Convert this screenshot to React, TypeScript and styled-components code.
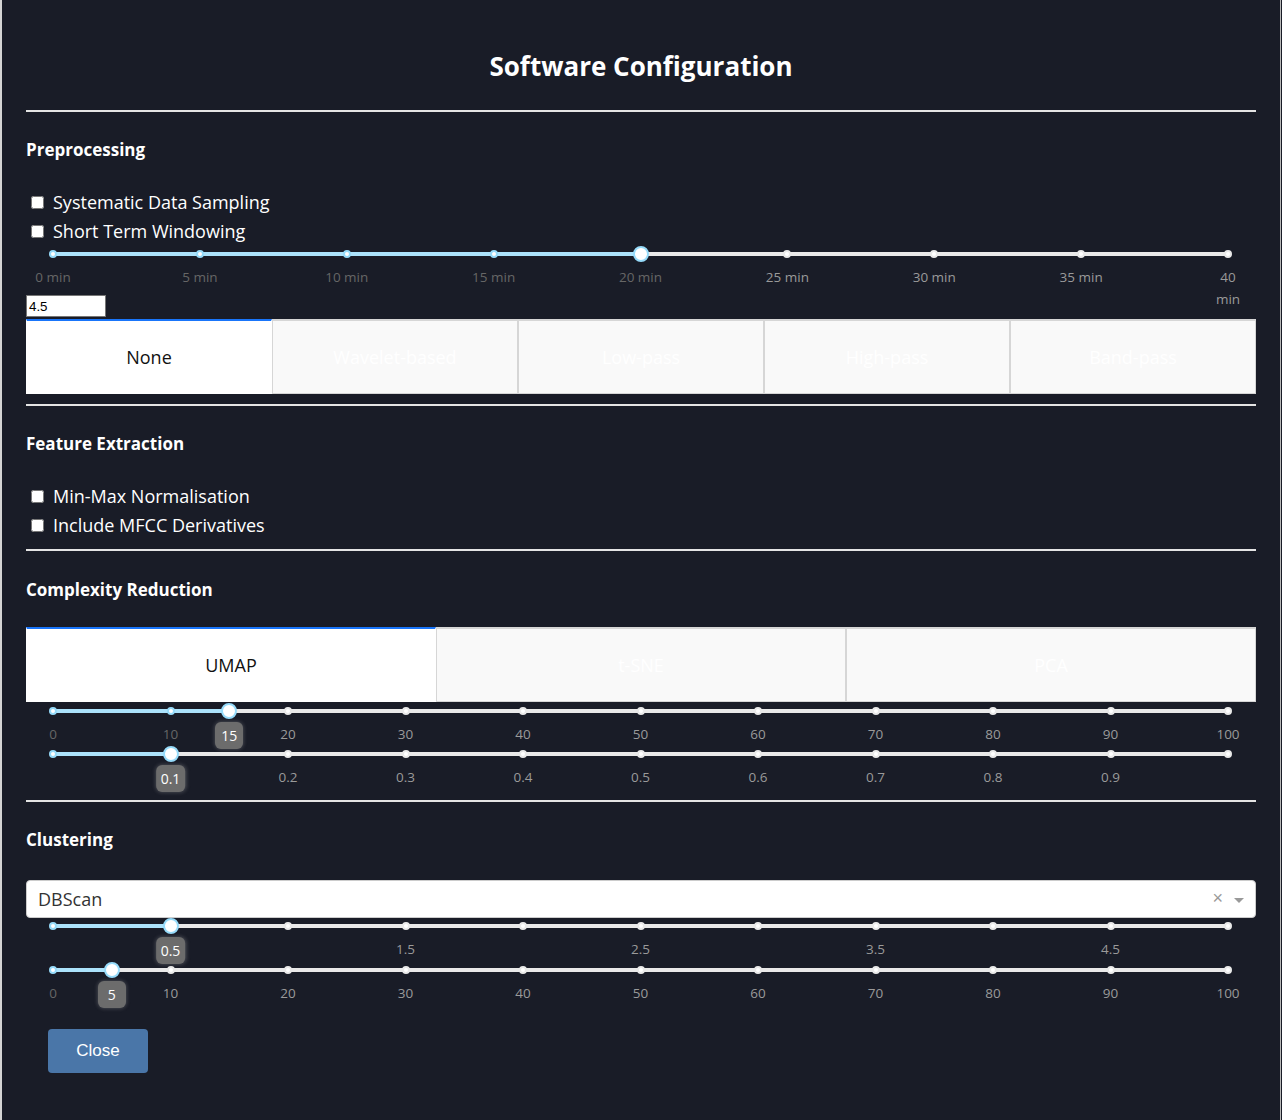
import React from "react";
import styled, { createGlobalStyle } from "styled-components";

const GlobalStyle = createGlobalStyle`
  html, body { margin: 0; padding: 0; background: #191c27; }
  body { font-family: "Open Sans", "Noto Sans", sans-serif; color: #fff; }
  * { box-sizing: border-box; }
`;

const Modal = styled.div`
  width: 1281px;
  min-height: 1120px;
  background: #191c27;
  border-left: 2px solid #d4d4d4;
  border-right: 1px solid #b8b8b8;
  padding: 0 24px 40px 24px;
`;

const Title = styled.h2`
  margin: 0 0 24px 0;
  padding-top: 46px;
  font: 700 26px/40px "Open Sans", sans-serif;
  text-align: center;
  color: #fff;
`;

const Divider = styled.hr<{ $top?: number }>`
  margin: ${(p) => p.$top ?? 0}px 0 0 0;
  border: 0;
  height: 2px;
  background: #e4e4e4;
`;

const SectionTitle = styled.h3<{ $top?: number; $bottom?: number }>`
  margin: ${(p) => p.$top ?? 26}px 0 ${(p) => p.$bottom ?? 26}px 0;
  font: 700 17px/24px "Open Sans", sans-serif;
  color: #fff;
`;

const CheckRow = styled.label`
  display: flex;
  align-items: center;
  height: 29px;
  font: 400 18px/29px "Open Sans", sans-serif;
  color: #fff;
`;

const CheckBox = styled.input`
  width: 13px;
  height: 13px;
  margin: 0 9px 0 5px;
`;

const NumberInput = styled.input`
  display: block;
  width: 80px;
  height: 22px;
  margin-top: 6px;
  padding: 1px 2px;
  border: 1px solid #767676;
  font: 400 13.33px "Liberation Sans", Arial, sans-serif;
  color: #000;
  background: #fff;
`;

const TabBar = styled.div<{ $top?: number }>`
  display: flex;
  margin-top: ${(p) => p.$top ?? 0}px;
  height: 75px;
`;

const Tab = styled.div<{ $selected?: boolean }>`
  flex: 1 1 0;
  display: flex;
  align-items: center;
  justify-content: center;
  font: 400 18px "Open Sans", sans-serif;
  background: ${(p) => (p.$selected ? "#fff" : "#f9f9f9")};
  color: ${(p) => (p.$selected ? "#111" : "#fff")};
  border: 1px solid ${(p) => (p.$selected ? "#fff" : "#d6d6d6")};
  border-top: 2px solid ${(p) => (p.$selected ? "#1975fa" : "#d6d6d6")};
`;

const SliderBox = styled.div<{ $top?: number }>`
  position: relative;
  height: 43px;
  margin: ${(p) => p.$top ?? 0}px 28px 0 27px;
`;

const Rail = styled.div`
  position: absolute;
  left: 0;
  right: 0;
  top: 6px;
  height: 4px;
  border-radius: 6px;
  background: #e9e9e9;
`;

const Track = styled.div`
  position: absolute;
  left: 0;
  top: 6px;
  height: 4px;
  border-radius: 6px;
  background: #abe2fb;
`;

const Dot = styled.span<{ $active?: boolean }>`
  position: absolute;
  top: 4px;
  width: 8px;
  height: 8px;
  margin-left: -4px;
  border-radius: 50%;
  background: #fff;
  border: 2px solid ${(p) => (p.$active ? "#96dbfa" : "#e9e9e9")};
`;

const Handle = styled.span`
  position: absolute;
  top: 0;
  width: 16px;
  height: 16px;
  margin-left: -8px;
  border-radius: 50%;
  background: #fff;
  border: 2px solid #96dbfa;
  z-index: 2;
`;

const MarkLabel = styled.span<{ $active?: boolean }>`
  position: absolute;
  top: 20px;
  transform: translateX(-50%);
  text-align: center;
  font: 400 13.5px/22px "Open Sans", sans-serif;
  color: ${(p) => (p.$active ? "#666" : "#9a9a9a")};
`;

const Tooltip = styled.span`
  position: absolute;
  top: 19px;
  transform: translateX(-50%);
  min-width: 28px;
  height: 27px;
  padding: 0 5px;
  border-radius: 6px;
  background: #6c6c6c;
  box-shadow: 0 0 4px rgba(200, 200, 200, 0.35);
  color: #fff;
  font: 400 14px/27px "Open Sans", sans-serif;
  text-align: center;
  z-index: 3;
`;

type Mark = { v: number; text: string };

type SliderProps = {
  min: number;
  max: number;
  value: number;
  dots: number[];
  marks: Mark[];
  tooltip?: string;
  top?: number;
};

const Slider = ({ min, max, value, dots, marks, tooltip, top }: SliderProps) => {
  const pct = (v: number) => ((v - min) / (max - min)) * 100;
  return (
    <SliderBox $top={top}>
      <Rail />
      <Track style={{ width: `${pct(value)}%` }} />
      {dots.map((d) => (
        <Dot key={`d${d}`} $active={d <= value} style={{ left: `${pct(d)}%` }} />
      ))}
      {marks.map((m) => (
        <MarkLabel key={`m${m.v}`} $active={m.v <= value} style={{ left: `${pct(m.v)}%` }}>
          {m.text}
        </MarkLabel>
      ))}
      <Handle style={{ left: `${pct(value)}%` }} />
      {tooltip && <Tooltip style={{ left: `${pct(value)}%` }}>{tooltip}</Tooltip>}
    </SliderBox>
  );
};

const Dropdown = styled.div`
  display: flex;
  align-items: center;
  height: 38px;
  margin-top: 28px;
  padding: 0 11px 0 11px;
  border: 1px solid #ccc;
  border-radius: 4px;
  background: #fff;
`;

const DropValue = styled.span`
  flex: 1;
  font: 400 18px "Open Sans", sans-serif;
  color: #333;
`;

const ClearX = styled.span`
  font: 400 18px/1 "Liberation Sans", Arial, sans-serif;
  color: #999;
  margin-right: 11px;
  margin-top: -3px;
`;

const Caret = styled.span`
  width: 0;
  height: 0;
  border-left: 5px solid transparent;
  border-right: 5px solid transparent;
  border-top: 5px solid #999;
  margin-top: 3px;
`;

const CloseButton = styled.button`
  display: block;
  width: 100px;
  height: 44px;
  margin: 24px 0 0 22px;
  border: 0;
  border-radius: 4px;
  background: #4a76a8;
  color: #fff;
  font: 400 17px "Liberation Sans", Arial, sans-serif;
`;

const range = (a: number, b: number, s: number) => {
  const out: number[] = [];
  for (let i = 0; a + i * s <= b + 1e-9; i++) out.push(Math.round((a + i * s) * 100) / 100);
  return out;
};

export default function App() {
  const minDots = range(0, 40, 5);
  const tens = range(0, 100, 10);
  return (
    <>
      <GlobalStyle />
      <Modal>
        <Title>Software Configuration</Title>
        <Divider />

        <SectionTitle>Preprocessing</SectionTitle>
        <CheckRow>
          <CheckBox type="checkbox" />
          Systematic Data Sampling
        </CheckRow>
        <CheckRow>
          <CheckBox type="checkbox" />
          Short Term Windowing
        </CheckRow>
        <Slider
          min={0}
          max={40}
          value={20}
          dots={minDots}
          marks={minDots.map((v) => ({ v, text: `${v} min` }))}
        />
        <NumberInput defaultValue="4.5" />
        <TabBar $top={2}>
          <Tab $selected>None</Tab>
          <Tab>Wavelet-based</Tab>
          <Tab>Low-pass</Tab>
          <Tab>High-pass</Tab>
          <Tab>Band-pass</Tab>
        </TabBar>
        <Divider $top={10} />

        <SectionTitle>Feature Extraction</SectionTitle>
        <CheckRow>
          <CheckBox type="checkbox" />
          Min-Max Normalisation
        </CheckRow>
        <CheckRow>
          <CheckBox type="checkbox" />
          Include MFCC Derivatives
        </CheckRow>
        <Divider $top={9} />

        <SectionTitle $top={27} $bottom={25}>Complexity Reduction</SectionTitle>
        <TabBar>
          <Tab $selected>UMAP</Tab>
          <Tab>t-SNE</Tab>
          <Tab>PCA</Tab>
        </TabBar>
        <Slider
          top={1}
          min={0}
          max={100}
          value={15}
          dots={tens}
          marks={tens.map((v) => ({ v, text: `${v}` }))}
          tooltip="15"
        />
        <Slider
          min={0}
          max={1}
          value={0.1}
          dots={range(0, 1, 0.1)}
          marks={range(0.2, 0.9, 0.1).map((v) => ({ v, text: `${v}` }))}
          tooltip="0.1"
        />
        <Divider $top={11} />

        <SectionTitle $bottom={0}>Clustering</SectionTitle>
        <Dropdown>
          <DropValue>DBScan</DropValue>
          <ClearX>×</ClearX>
          <Caret />
        </Dropdown>
        <Slider
          min={0}
          max={5}
          value={0.5}
          dots={range(0, 5, 0.5)}
          marks={[1.5, 2.5, 3.5, 4.5].map((v) => ({ v, text: `${v}` }))}
          tooltip="0.5"
        />
        <Slider
          top={1}
          min={0}
          max={100}
          value={5}
          dots={tens}
          marks={tens.map((v) => ({ v, text: `${v}` }))}
          tooltip="5"
        />
        <CloseButton>Close</CloseButton>
      </Modal>
    </>
  );
}
